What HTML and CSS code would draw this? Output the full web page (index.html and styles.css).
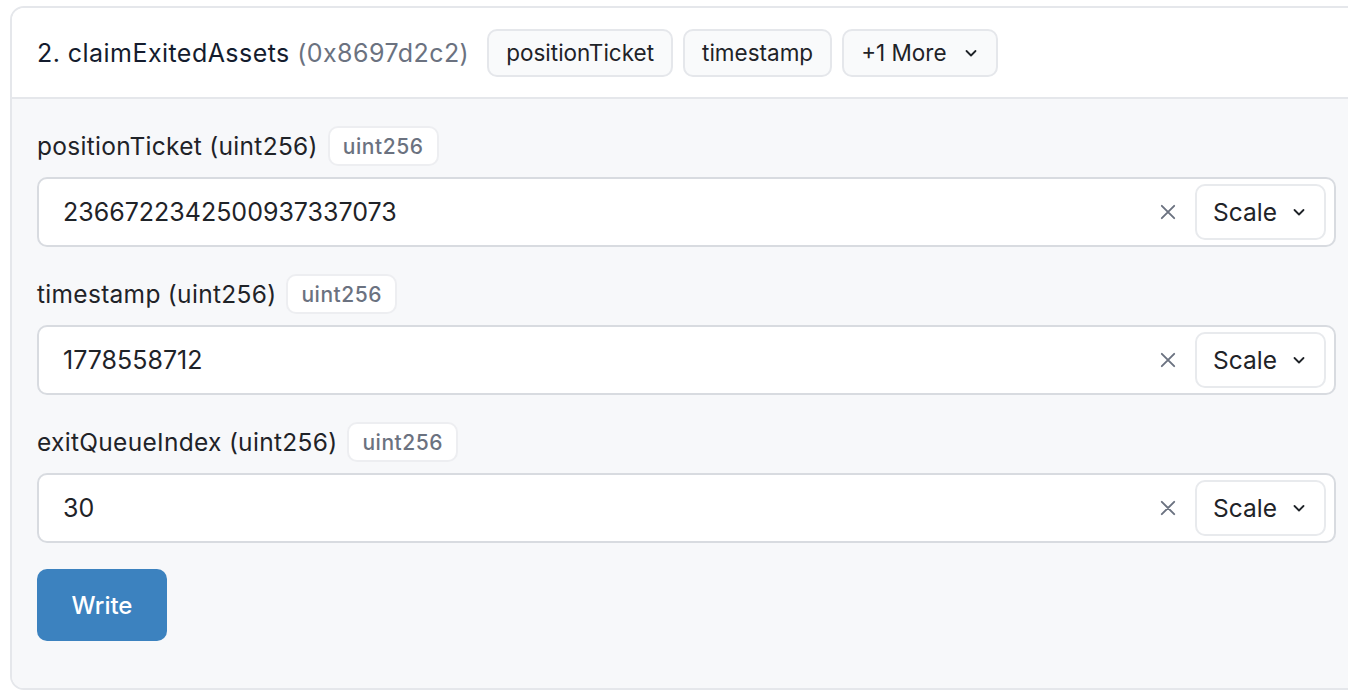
FILE: index.html
```html
<!DOCTYPE html>
<html lang="en">
<head>
  <meta charset="UTF-8" />
  <meta name="viewport" content="width=device-width, initial-scale=1.0" />
  <title>claimExitedAssets</title>
  <link rel="stylesheet" href="styles.css">
</head>
<body>
  <div class="card">
    <div class="card-head">
      <div class="fn-name">2. claimExitedAssets <span class="selector">(0x8697d2c2)</span></div>
      <div class="pills">
        <span class="pill">positionTicket</span>
        <span class="pill">timestamp</span>
        <span class="pill">+1 More
          <svg class="chev" viewBox="0 0 16 16" width="16" height="16"><path d="M3.5 6l4.5 4.5L12.5 6" /></svg>
        </span>
      </div>
    </div>

    <form class="card-body">
      <div class="field">
        <div class="label-row">
          <label for="positionTicket">positionTicket (uint256)</label>
          <span class="type-badge">uint256</span>
        </div>
        <div class="input-box">
          <input type="text" id="positionTicket" value="2366722342500937337073" />
          <button type="button" class="clear">
            <svg viewBox="0 0 16 16" width="18" height="18"><path d="M2.5 2.5l11 11M13.5 2.5l-11 11" /></svg>
          </button>
          <button type="button" class="scale">Scale
            <svg class="chev" viewBox="0 0 16 16" width="16" height="16"><path d="M3.5 6l4.5 4.5L12.5 6" /></svg>
          </button>
        </div>
      </div>

      <div class="field">
        <div class="label-row">
          <label for="timestamp">timestamp (uint256)</label>
          <span class="type-badge">uint256</span>
        </div>
        <div class="input-box">
          <input type="text" id="timestamp" value="1778558712" />
          <button type="button" class="clear">
            <svg viewBox="0 0 16 16" width="18" height="18"><path d="M2.5 2.5l11 11M13.5 2.5l-11 11" /></svg>
          </button>
          <button type="button" class="scale">Scale
            <svg class="chev" viewBox="0 0 16 16" width="16" height="16"><path d="M3.5 6l4.5 4.5L12.5 6" /></svg>
          </button>
        </div>
      </div>

      <div class="field">
        <div class="label-row">
          <label for="exitQueueIndex">exitQueueIndex (uint256)</label>
          <span class="type-badge">uint256</span>
        </div>
        <div class="input-box">
          <input type="text" id="exitQueueIndex" value="30" />
          <button type="button" class="clear">
            <svg viewBox="0 0 16 16" width="18" height="18"><path d="M2.5 2.5l11 11M13.5 2.5l-11 11" /></svg>
          </button>
          <button type="button" class="scale">Scale
            <svg class="chev" viewBox="0 0 16 16" width="16" height="16"><path d="M3.5 6l4.5 4.5L12.5 6" /></svg>
          </button>
        </div>
      </div>

      <button type="button" class="write">Write</button>
    </form>
  </div>
</body>
</html>
```

FILE: styles.css
```css
body {
  font-family: Inter, 'Noto Sans', sans-serif;
  margin: 0;
  background: #fff;
  color: #1f2328;
  overflow: hidden;
}
.card {
  margin: 6px 0 0 10px;
  width: 1353px;
  border: 2px solid #e5e7eb;
  border-radius: 14px;
  overflow: hidden;
  box-sizing: border-box;
}
.card-head {
  display: flex;
  align-items: center;
  height: 91px;
  padding: 0 25px;
  background: #fff;
  border-bottom: 2px solid #e5e7eb;
  box-sizing: border-box;
}
.fn-name {
  font-size: 25px;
  letter-spacing: 0.45px;
  color: #141c2e;
}
.selector {
  color: #6b7280;
}
.pills {
  display: flex;
  gap: 10px;
  margin-left: 18px;
}
.pill {
  display: flex;
  align-items: center;
  gap: 16px;
  height: 48px;
  padding: 0 17px;
  font-size: 22.5px;
  color: #1f2328;
  background: #f9fafb;
  border: 2px solid #e5e7eb;
  border-radius: 10px;
  box-sizing: border-box;
}
.chev {
  fill: none;
  stroke: currentColor;
  stroke-width: 1.8;
  stroke-linecap: round;
  stroke-linejoin: round;
}
.card-body {
  margin: 0;
  background: #f7f8fa;
  padding: 27px 25px 48px;
  height: 589px;
  box-sizing: border-box;
}
.field {
  margin-bottom: 27px;
}
.field:nth-last-of-type(1) {
  margin-bottom: 26px;
}
.label-row {
  display: flex;
  align-items: center;
  gap: 10px;
  height: 40px;
  margin-bottom: 11px;
}
label {
  font-size: 24.5px;
  letter-spacing: 0.3px;
  color: #1f2328;
}
.type-badge {
  display: flex;
  align-items: center;
  height: 40px;
  padding: 0 13px;
  font-size: 21px;
  font-weight: 500;
  letter-spacing: 0.55px;
  color: #6b7280;
  background: #fff;
  border: 2px solid #edeef1;
  border-radius: 10px;
  box-sizing: border-box;
}
.input-box {
  display: flex;
  align-items: center;
  height: 70px;
  padding: 0 8px 0 24px;
  background: #fff;
  border: 2px solid #d8dbe0;
  border-radius: 10px;
  box-sizing: border-box;
}
.input-box input {
  flex: 1;
  border: none;
  outline: none;
  padding: 0;
  font-family: inherit;
  font-size: 25px;
  color: #1f2328;
  background: transparent;
}
.clear {
  display: flex;
  align-items: center;
  justify-content: center;
  width: 34px;
  height: 34px;
  margin-right: 10px;
  padding: 0;
  border: none;
  background: none;
  color: #6b7280;
  cursor: pointer;
}
.clear svg {
  fill: none;
  stroke: currentColor;
  stroke-width: 1.7;
  stroke-linecap: round;
}
.scale {
  display: flex;
  align-items: center;
  gap: 14px;
  height: 56px;
  padding: 0 17px 0 16px;
  font-family: inherit;
  font-size: 24.5px;
  color: #1f2328;
  background: #fff;
  border: 2px solid #e8eaed;
  border-radius: 10px;
  cursor: pointer;
}
.write {
  width: 130px;
  height: 72px;
  font-family: inherit;
  font-size: 24px;
  font-weight: 500;
  color: #fff;
  background: #3c82bf;
  border: none;
  border-radius: 10px;
  cursor: pointer;
}
```
